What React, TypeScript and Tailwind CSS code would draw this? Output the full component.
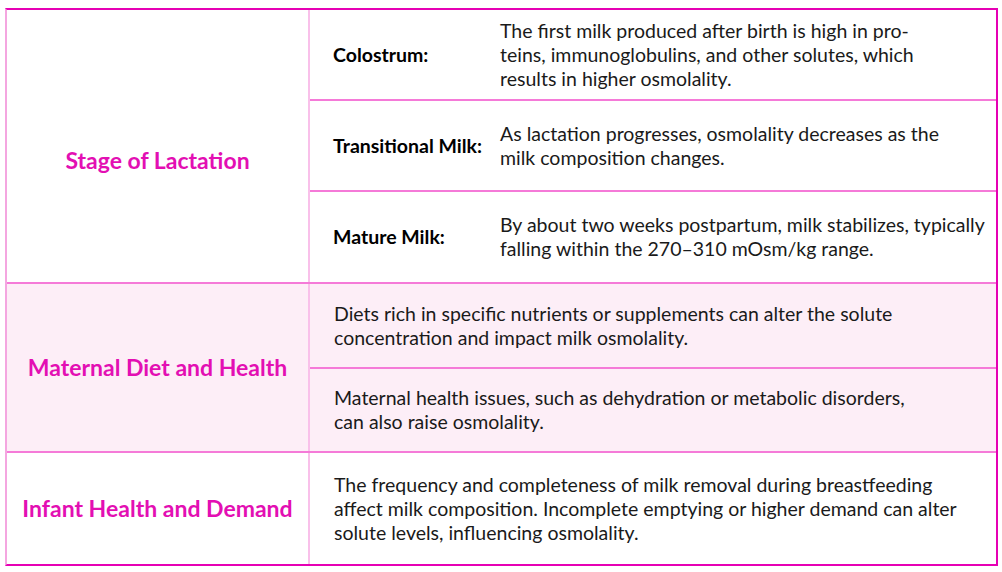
import React from "react";

const font = { fontFamily: '"Lato", "Noto Sans", sans-serif' };

function SubRow({ label, text, h, last }: { label: string; text: React.ReactNode; h: string; last?: boolean }) {
  return (
    <div className={`grid grid-cols-[190px_1fr] items-center ${h} ${last ? "" : "border-b-2 border-[#f57ad8]"}`}>
      <div className="pl-[23px] text-[19.5px] font-bold text-black leading-6">{label}</div>
      <div className="pr-[4px] text-[19.5px] text-[#1a1a1a] leading-6 whitespace-nowrap">{text}</div>
    </div>
  );
}

function Plain({ text, h, last }: { text: React.ReactNode; h: string; last?: boolean }) {
  return (
    <div className={`flex items-center pl-[24px] pr-[4px] ${h} ${last ? "" : "border-b-2 border-[#f57ad8]"}`}>
      <div className="text-[19.5px] text-[#1a1a1a] leading-6 whitespace-nowrap">{text}</div>
    </div>
  );
}

export default function App() {
  return (
    <div className="w-[1002px] h-[572px] bg-white pt-[8px] pl-[5px]" style={font}>
      <div className="w-[993px] border-t-2 border-b-2 border-r-2 border-l-2 border-t-[#e600b4] border-b-[#e600b4] border-r-[#e600b4] border-l-[#f4a6e0]">
        {/* Stage of Lactation */}
        <div className="grid grid-cols-[303px_1fr] border-b-2 border-[#f57ad8]">
          <div className="flex items-center justify-center pt-[28px] border-r-2 border-[#f9c0ea] text-[23px] font-bold text-[#e30fb3]">
            Stage of Lactation
          </div>
          <div>
            <SubRow
              label="Colostrum:"
              h="h-[91px]"
              text={
                <>
                  The first milk produced after birth is high in pro-
                  <br />
                  teins, immunoglobulins, and other solutes, which
                  <br />
                  results in higher osmolality.
                </>
              }
            />
            <SubRow
              label="Transitional Milk:"
              h="h-[91px]"
              text={
                <>
                  As lactation progresses, osmolality decreases as the
                  <br />
                  milk composition changes.
                </>
              }
            />
            <SubRow
              label="Mature Milk:"
              h="h-[90px]"
              last
              text={
                <>
                  By about two weeks postpartum, milk stabilizes, typically
                  <br />
                  falling within the 270–310 mOsm/kg range.
                </>
              }
            />
          </div>
        </div>
        {/* Maternal Diet and Health */}
        <div className="grid grid-cols-[303px_1fr] border-b-2 border-[#f57ad8] bg-[#fdeef7]">
          <div className="flex items-center justify-center border-r-2 border-[#f9c0ea] text-[23px] font-bold text-[#e30fb3]">
            Maternal Diet and Health
          </div>
          <div>
            <Plain
              h="h-[85px]"
              text={
                <>
                  Diets rich in specific nutrients or supplements can alter the solute
                  <br />
                  concentration and impact milk osmolality.
                </>
              }
            />
            <Plain
              h="h-[82px]"
              last
              text={
                <>
                  Maternal health issues, such as dehydration or metabolic disorders,
                  <br />
                  can also raise osmolality.
                </>
              }
            />
          </div>
        </div>
        {/* Infant Health and Demand */}
        <div className="grid grid-cols-[303px_1fr]">
          <div className="flex items-center justify-center border-r-2 border-[#f9c0ea] text-[23px] font-bold text-[#e30fb3]">
            Infant Health and Demand
          </div>
          <Plain
            h="h-[111px]"
            last
            text={
              <>
                The frequency and completeness of milk removal during breastfeeding
                <br />
                affect milk composition. Incomplete emptying or higher demand can alter
                <br />
                solute levels, influencing osmolality.
              </>
            }
          />
        </div>
      </div>
    </div>
  );
}
